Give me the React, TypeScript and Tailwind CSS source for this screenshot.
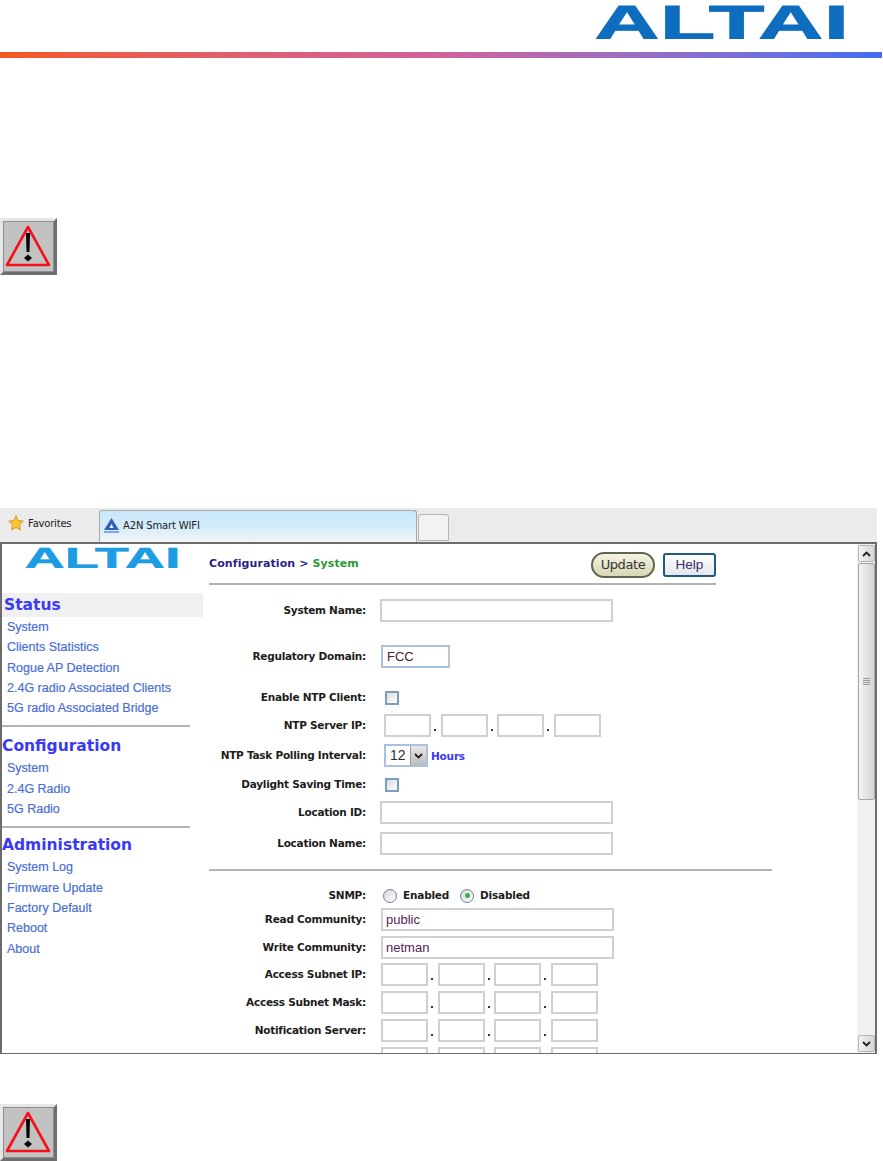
import React from "react";

const tahoma = "font-['DejaVu_Sans',sans-serif]";
const arial = "font-['Liberation_Sans',Arial,sans-serif]";

const WarningIcon = () => (
  <div className="w-[57px] h-[57px] bg-[#c2c2c2] border-t-[3px] border-l-[3px] border-t-[#e6e6e6] border-l-[#e6e6e6] border-r-[3px] border-b-[3px] border-r-[#6f6f6f] border-b-[#6f6f6f]">
    <div className="w-full h-full border border-[#8c8c8c]">
      <svg width="49" height="49" viewBox="4 4 49 49">
        <path d="M28 9 L49 47 L7 47 Z" fill="none" stroke="#f5101a" strokeWidth="2.6" strokeLinejoin="round" />
        <path d="M26 15 h4 l-0.5 19 h-3 z" fill="#050505" />
        <path d="M28 36.5 l4 3.5 -4 3.5 -4 -3.5 z" fill="#050505" />
      </svg>
    </div>
  </div>
);

const Logo = ({ width, height, color }: { width: number; height: number; color: string }) => (
  <svg width={width} height={height} viewBox="0 0 255 36">
    <text
      x="0"
      y="35.5"
      textLength="255"
      lengthAdjust="spacingAndGlyphs"
      fontFamily="'Liberation Sans', Arial, sans-serif"
      fontWeight="700"
      fontSize="49"
      fill={color}
      stroke={color}
      strokeWidth="0.8"
    >
      ALTAI
    </text>
  </svg>
);

const SideHeading = ({ children, className = "" }: { children: React.ReactNode; className?: string }) => (
  <div className={`${tahoma} font-bold text-[15.5px] leading-[24px] h-[24px] text-[#3a3af5] ${className}`}>{children}</div>
);

const SideLink = ({ children }: { children: React.ReactNode }) => (
  <a className={`${arial} block h-[20.3px] leading-[20.3px] pl-[5px] text-[12.5px] font-medium text-[#4a6ed6] [-webkit-text-stroke:0.2px_#4a6ed6]`}>{children}</a>
);

const Divider = ({ className = "" }: { className?: string }) => <div className={`h-[2px] bg-[#b4b4b4] ${className}`} />;

const Label = ({ children }: { children: React.ReactNode }) => (
  <div className={`${tahoma} w-[163px] shrink-0 text-right font-bold text-[10.5px] text-[#1c1c1c] whitespace-nowrap tracking-[-0.25px]`}>{children}</div>
);

const TextBox = ({ value = "", w, ml }: { value?: string; w: string; ml: string }) => (
  <div className={`${arial} ${w} ${ml} h-[23px] border-2 border-[#d0d0d0] bg-white pl-[3px] text-[13px] leading-[19px] text-[#5a1c5c]`}>{value}</div>
);

const IpBoxes = ({ ml, gaps }: { ml: string; gaps: string }) => (
  <div className={`flex ${ml} ${gaps}`}>
    {[0, 1, 2, 3].map((i) => (
      <div key={i} className="relative w-[47px] h-[23px] border-2 border-[#d0d0d0]">
        {i < 3 && <span className="absolute left-[48px] top-[13px] w-[2px] h-[2px] bg-[#333]" />}
      </div>
    ))}
  </div>
);

const Check = () => (
  <div className="ml-[19px] w-[14px] h-[14px] border-2 border-[#7d9dbd] bg-gradient-to-br from-[#dcdcdc] to-white" />
);

const Radio = ({ on }: { on?: boolean }) => (
  <div className="w-[14px] h-[14px] rounded-full border border-[#6f8296] bg-gradient-to-br from-[#d8d8d8] to-white flex items-center justify-center">
    {on && <div className="w-[5px] h-[5px] rounded-full bg-[#3cb04a]" />}
  </div>
);

const ArrowBtn = ({ down, className = "" }: { down?: boolean; className?: string }) => (
  <div className={`w-[17px] h-[17px] rounded-[2px] border border-[#b5b5b5] bg-gradient-to-r from-[#f2f2f2] to-[#d6d6d6] flex items-center justify-center ${className}`}>
    <svg width="9" height="6" viewBox="0 0 9 6">
      <path d={down ? "M1 1 L4.5 4.5 L8 1" : "M1 5 L4.5 1.5 L8 5"} fill="none" stroke="#222" strokeWidth="1.8" />
    </svg>
  </div>
);

const App = () => {
  return (
    <div className="w-[883px] h-[1161px] bg-white overflow-hidden">
      {/* document header */}
      <div className="h-[52px] flex justify-end pt-[3px] pr-[34px]">
        <Logo width={255} height={36} color="#0f6dbf" />
      </div>
      <div className="h-[6px] w-[882px] bg-gradient-to-r from-[#f4581c] via-[#d0609c] to-[#3f6cf4]" />

      <div className="mt-[160px]">
        <WarningIcon />
      </div>

      {/* browser screenshot */}
      <div className="mt-[233px] w-[877px] h-[546px] flex flex-col">
        <div className="h-[34px] shrink-0 bg-[#ebebeb] flex items-end relative">
          <div className="w-[99px] h-[32px] flex items-center pl-[8px] gap-[4px] pb-[6px]">
            <svg width="16" height="16" viewBox="0 0 24 24">
              <path d="M12 1 L15.4 8.2 L23 9.2 L17.4 14.6 L18.8 22.5 L12 18.7 L5.2 22.5 L6.6 14.6 L1 9.2 L8.6 8.2 Z" fill="#f9c433" stroke="#c98a1a" strokeWidth="1.2" />
            </svg>
            <span className={`${tahoma} text-[10px] text-[#222] tracking-[-0.2px]`}>Favorites</span>
          </div>
          <div className="w-[318px] h-[32px] rounded-t-[3px] border border-b-0 border-[#a8a8a8] bg-gradient-to-b from-[#c9e8fb] via-[#d3ecfb] to-[#f2f4f4] flex items-center pl-[3px] gap-[3px] pb-[3px]">
            <svg width="17" height="17" viewBox="0 0 17 17">
              <path d="M8.5 1 L16 13 H1 Z" fill="#2f5fc0" />
              <path d="M8.5 7 L10.5 11 H6.5 Z" fill="#fff" />
              <rect x="1" y="14" width="15" height="2" fill="#8aa4dc" />
            </svg>
            <span className={`${tahoma} text-[10px] text-[#222] tracking-[-0.15px]`}>A2N Smart WIFI</span>
          </div>
          <div className="w-[31px] h-[27px] ml-[1px] mb-[1px] rounded-t-[3px] border border-[#b4b4b4] bg-[#f2f2f2]" />
        </div>

        <div className="flex-1 min-h-0 flex border-2 border-[#6c6c6c] border-l-[2px] border-b-[1px] bg-white overflow-hidden">
          {/* sidebar */}
          <div className="w-[201px] shrink-0">
            <div className="h-[49px] pl-[20px] pt-[2px]">
              <Logo width={161} height={22} color="#1b9ce3" />
            </div>
            <SideHeading className="bg-[#f0f0f0] pl-[2px]">Status</SideHeading>
            <SideLink>System</SideLink>
            <SideLink>Clients Statistics</SideLink>
            <SideLink>Rogue AP Detection</SideLink>
            <SideLink>2.4G radio Associated Clients</SideLink>
            <SideLink>5G radio Associated Bridge</SideLink>
            <Divider className="w-[188px] mt-[7px]" />
            <SideHeading className="mt-[7px]">Configuration</SideHeading>
            <SideLink>System</SideLink>
            <SideLink>2.4G Radio</SideLink>
            <SideLink>5G Radio</SideLink>
            <Divider className="w-[188px] mt-[7px]" />
            <SideHeading className="mt-[5px]">Administration</SideHeading>
            <SideLink>System Log</SideLink>
            <SideLink>Firmware Update</SideLink>
            <SideLink>Factory Default</SideLink>
            <SideLink>Reboot</SideLink>
            <SideLink>About</SideLink>
          </div>

          {/* form */}
          <div className="flex-1 min-w-0 overflow-hidden pl-[6px]">
            <div className="w-[507px] h-[39px] pt-[2px] flex items-center justify-between">
              <div className={`${tahoma} font-bold text-[11px] tracking-[0.1px]`}>
                <span className="text-[#2a1f86]">Configuration &gt; </span>
                <span className="text-[#2c9a33]">System</span>
              </div>
              <div className="flex items-center gap-[8px]">
                <button className={`${tahoma} w-[64px] h-[26px] rounded-full border-2 border-[#5f6650] bg-gradient-to-b from-[#f6f4e2] to-[#d8d6b4] text-[13px] tracking-[-0.4px] text-[#333]`}>Update</button>
                <button className={`${arial} w-[53px] h-[24px] mt-[1px] rounded-[3px] border-2 border-[#1f5a86] bg-gradient-to-b from-white to-[#e4e6ea] text-[13.5px] text-[#3a2a6a]`}>Help</button>
              </div>
            </div>
            <Divider className="w-[507px]" />

            <div className="-ml-[6px] w-[620px]">
              <div className="flex items-center h-[23px] mt-[14px]">
                <Label>System Name:</Label>
                <TextBox w="w-[233px]" ml="ml-[14px]" />
              </div>

              <div className="flex items-center h-[23px] mt-[23px]">
                <Label>Regulatory Domain:</Label>
                <div className={`${arial} ml-[15px] w-[69px] h-[23px] border-2 border-[#a9c1dc] border-r-[#c4c4c4] pl-[4px] text-[13px] leading-[19px] text-[#4b2030]`}>FCC</div>
              </div>

              <div className="flex items-center h-[23px] mt-[18px]">
                <Label>Enable NTP Client:</Label>
                <Check />
              </div>

              <div className="flex items-center h-[23px] mt-[5px]">
                <Label>NTP Server IP:</Label>
                <IpBoxes ml="ml-[18px]" gaps="gap-[9.5px]" />
              </div>

              <div className="flex items-center h-[23px] mt-[7px]">
                <Label>NTP Task Polling Interval:</Label>
                <div className={`${arial} ml-[18px] w-[44px] h-[23px] border-2 border-[#a9c1dc] flex items-center text-[14px] text-[#2e2e2e]`}>
                  <span className="w-[24px] pl-[4px]">12</span>
                  <div className="flex-1 h-full bg-gradient-to-b from-[#e8e8e8] to-[#bcbcbc] border-l border-[#999] flex items-center justify-center">
                    <svg width="9" height="6" viewBox="0 0 9 6">
                      <path d="M1 1 L4.5 4.5 L8 1" fill="none" stroke="#222" strokeWidth="1.8" />
                    </svg>
                  </div>
                </div>
                <span className={`${tahoma} ml-[3px] mt-[3px] font-bold text-[10.5px] tracking-[-0.2px] text-[#3a3af5]`}>Hours</span>
              </div>

              <div className="flex items-center h-[23px] mt-[6px]">
                <Label>Daylight Saving Time:</Label>
                <Check />
              </div>

              <div className="flex items-center h-[23px] mt-[5px]">
                <Label>Location ID:</Label>
                <TextBox w="w-[233px]" ml="ml-[14px]" />
              </div>

              <div className="flex items-center h-[23px] mt-[8px]">
                <Label>Location Name:</Label>
                <TextBox w="w-[233px]" ml="ml-[14px]" />
              </div>

              <div className="ml-[6px] w-[563px] mt-[14px]">
                <Divider />
              </div>

              <div className="flex items-center h-[23px] mt-[13px]">
                <Label>SNMP:</Label>
                <div className={`${tahoma} ml-[17px] flex items-center font-bold text-[10.5px] tracking-[-0.2px] text-[#1c1c1c]`}>
                  <Radio />
                  <span className="ml-[6px]">Enabled</span>
                  <div className="ml-[11px]"><Radio on /></div>
                  <span className="ml-[6px]">Disabled</span>
                </div>
              </div>

              <div className="flex items-center h-[23px] mt-[1px]">
                <Label>Read Community:</Label>
                <TextBox w="w-[233px]" ml="ml-[15px]" value="public" />
              </div>

              <div className="flex items-center h-[23px] mt-[5px]">
                <Label>Write Community:</Label>
                <TextBox w="w-[233px]" ml="ml-[15px]" value="netman" />
              </div>

              <div className="flex items-center h-[23px] mt-[4px]">
                <Label>Access Subnet IP:</Label>
                <IpBoxes ml="ml-[15px]" gaps="gap-[9.5px]" />
              </div>

              <div className="flex items-center h-[23px] mt-[5px]">
                <Label>Access Subnet Mask:</Label>
                <IpBoxes ml="ml-[15px]" gaps="gap-[9.5px]" />
              </div>

              <div className="flex items-center h-[23px] mt-[5px]">
                <Label>Notification Server:</Label>
                <IpBoxes ml="ml-[15px]" gaps="gap-[9.5px]" />
              </div>

              <div className="flex items-center h-[23px] mt-[5px]">
                <Label>{""}</Label>
                <IpBoxes ml="ml-[15px]" gaps="gap-[9.5px]" />
              </div>
            </div>
          </div>

          {/* scrollbar */}
          <div className="w-[18px] shrink-0 bg-[#f1f1f1] flex flex-col pt-[1px] pb-[1px] items-center">
            <ArrowBtn />
            <div className="w-[17px] h-[237px] mt-[1px] rounded-[2px] border border-[#a8a8a8] bg-gradient-to-r from-[#f4f4f4] to-[#d4d4d4] flex flex-col justify-center items-center gap-[1px]">
              <div className="w-[7px] h-[1px] bg-[#999]" />
              <div className="w-[7px] h-[1px] bg-[#999]" />
              <div className="w-[7px] h-[1px] bg-[#999]" />
              <div className="w-[7px] h-[1px] bg-[#999]" />
            </div>
            <div className="flex-1" />
            <ArrowBtn down />
          </div>
        </div>
      </div>

      <div className="mt-[50px]">
        <WarningIcon />
      </div>
    </div>
  );
};

export default App;
